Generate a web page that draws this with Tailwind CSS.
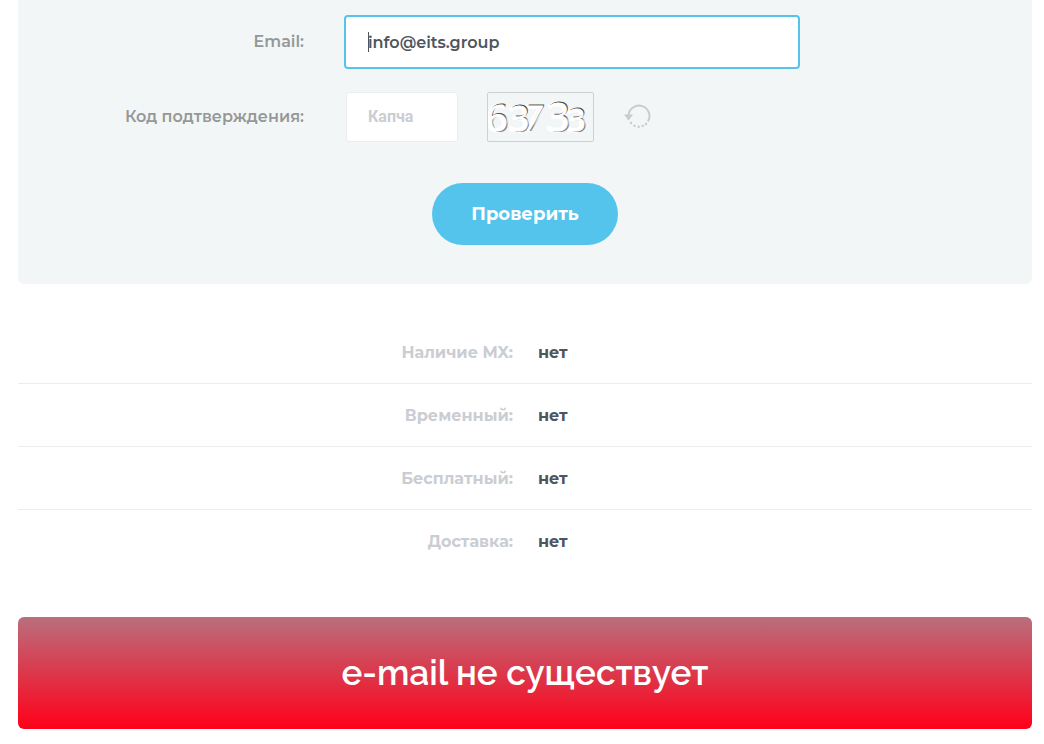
<!DOCTYPE html>
<html lang="ru">
  <head>
    <meta charset="UTF-8" />
    <meta name="viewport" content="width=device-width, initial-scale=1.0" />
    <title>Проверка e-mail</title>
    <script src="https://cdn.jsdelivr.net/npm/@tailwindcss/browser@4"></script>
  </head>
  <body class="bg-white font-['Montserrat','Inter',sans-serif] text-base text-[#4e555c]">
    <main class="pl-[18px] pr-3 pb-4">
      <form class="bg-[#f3f6f7] rounded-b-md pt-[15px] pb-[39px]">
        <div class="flex items-center gap-10">
          <label for="email" class="w-[286px] text-right font-semibold text-[#959896]">Email:</label>
          <div class="relative w-full max-w-[456px]">
            <input
              class="block w-full h-[54px] bg-white border-2 border-[#55c3ec] rounded-[4px] px-[22px] font-semibold outline-none"
              type="email"
              name="email"
              id="email"
              value="info@eits.group"
            />
            <span class="absolute left-6 top-[17px] w-px h-5 bg-[#4e555c]"></span>
          </div>
        </div>
        <div class="flex items-center mt-[23px]">
          <label for="captcha" class="w-[286px] text-right font-semibold text-[#959896]">Код подтверждения:</label>
          <input
            class="ml-[42px] w-28 h-[50px] bg-white border border-[#e9edef] rounded-[3px] px-[21px] pb-[2px] font-['Roboto',sans-serif] font-bold placeholder:text-[#cacdd2] outline-none"
            type="text"
            name="captcha"
            id="captcha"
            placeholder="Капча"
          />
          <svg
            class="ml-[29px] w-[107px] h-[50px] border border-[#cdd1d3] rounded-[2px]"
            viewBox="0 0 105 48"
            role="img"
            aria-label="Капча"
          >
            <defs>
              <linearGradient id="upper" gradientUnits="userSpaceOnUse" x1="0" y1="8" x2="0" y2="38">
                <stop offset="0" stop-color="#444444" />
                <stop offset="0.5" stop-color="#555555" />
                <stop offset="0.7" stop-color="#666666" stop-opacity="0" />
              </linearGradient>
              <linearGradient id="lower" gradientUnits="userSpaceOnUse" x1="0" y1="8" x2="0" y2="38">
                <stop offset="0.4" stop-color="#888888" stop-opacity="0" />
                <stop offset="0.8" stop-color="#888888" />
              </linearGradient>
              <g id="digits" font-family="Open Sans, sans-serif" font-weight="300">
                <text x="-1" y="37" font-size="36">6</text>
                <text x="22" y="37" font-size="34">3</text>
                <text x="36" y="36" font-size="33" font-style="italic">7</text>
                <text x="60" y="37" font-size="38">3</text>
                <text x="80" y="37" font-size="31">3</text>
              </g>
            </defs>
            <use href="#digits" x="-1" y="1" fill="#ffffff" stroke="#ffffff" stroke-width="3" />
            <use href="#digits" x="1" fill="url(#upper)" stroke="url(#upper)" stroke-width="1" />
            <use href="#digits" x="2" y="2" fill="url(#lower)" />
            <use href="#digits" y="1" fill="#ffffff" stroke="#ffffff" stroke-width="1" />
          </svg>
          <button type="button" class="ml-[30px] mb-[2px] cursor-pointer" aria-label="Обновить код">
            <svg class="w-[27px] h-6" viewBox="0 0 27 24" fill="none" stroke="#c8cccf" stroke-width="2">
              <path d="M4.500 11.500a10.500 10.500 0 1 1 19.500 6" />
              <path d="M0 10.500h9l-4.500 6z" fill="#c8cccf" stroke="none" />
              <path d="M7 19h.01M10.500 21.700h.01M14.700 22.700h.01M18.700 21.900h.01M22 20h.01" stroke-width="2.400" stroke-linecap="round" />
            </svg>
          </button>
        </div>
        <div class="flex justify-center mt-[41px]">
          <button
            class="w-[186px] h-[62px] bg-[#54c4ec] rounded-full text-white text-lg font-bold cursor-pointer"
            type="submit"
          >
            Проверить
          </button>
        </div>
      </form>

      <table class="w-full mt-[37px] table-fixed text-left border-separate border-spacing-0">
        <tbody>
          <tr class="h-[63px]">
            <th class="w-[495px] pt-[2px] border-b border-[#ebeced] text-right font-bold text-[#cacdd2]">Наличие MX:</th>
            <td class="pt-[2px] border-b border-[#ebeced] pl-[25px] font-bold">нет</td>
          </tr>
          <tr class="h-[63px]">
            <th class="pt-[2px] border-b border-[#ebeced] text-right font-bold text-[#cacdd2]">Временный:</th>
            <td class="pt-[2px] border-b border-[#ebeced] pl-[25px] font-bold">нет</td>
          </tr>
          <tr class="h-[63px]">
            <th class="pt-[2px] border-b border-[#ebeced] text-right font-bold text-[#cacdd2]">Бесплатный:</th>
            <td class="pt-[2px] border-b border-[#ebeced] pl-[25px] font-bold">нет</td>
          </tr>
          <tr class="h-[63px]">
            <th class="text-right font-bold text-[#cacdd2]">Доставка:</th>
            <td class="pl-[25px] font-bold">нет</td>
          </tr>
        </tbody>
      </table>

      <div
        class="mt-11 h-28 flex items-center justify-center rounded-md bg-linear-to-b/srgb from-[#b96f7d] to-[#ff0019] text-white text-[35px] font-semibold font-['Raleway','Lato',sans-serif]"
      >
        e-mail не существует
      </div>
    </main>
  </body>
</html>
